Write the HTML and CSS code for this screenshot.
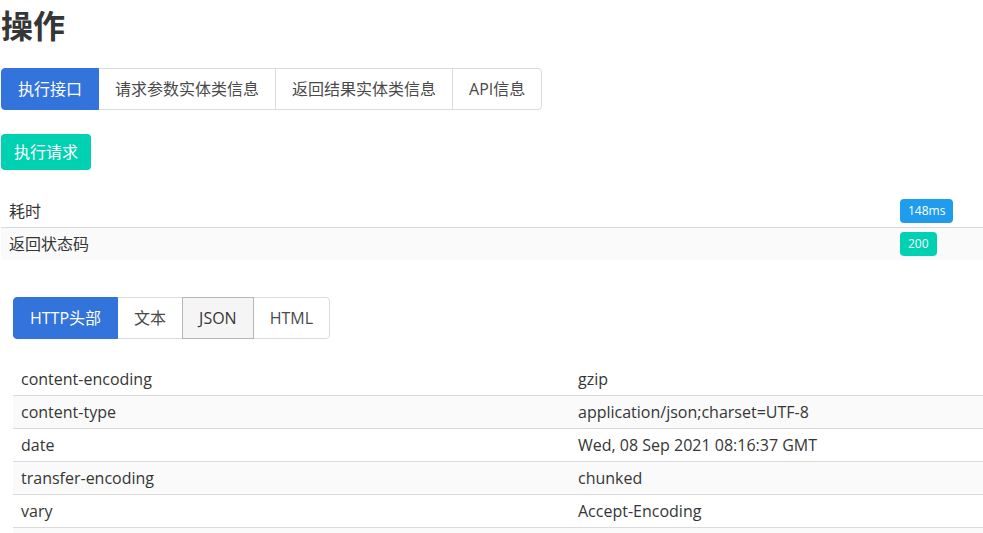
FILE: index.html
```html
<!DOCTYPE html>
<html lang="zh">
<head>
<meta charset="utf-8">
<title>操作</title>
<link rel="stylesheet" href="styles.css">
</head>
<body>
<div class="page">
  <h1 class="title">操作</h1>

  <div class="tabs">
    <ul>
      <li class="is-active"><a>执行接口</a></li>
      <li><a>请求参数实体类信息</a></li>
      <li><a>返回结果实体类信息</a></li>
      <li><a>API信息</a></li>
    </ul>
  </div>

  <div class="actions">
    <button class="button is-primary">执行请求</button>
  </div>

  <table class="table table-summary">
    <colgroup><col class="summary-key"><col></colgroup>
    <tbody>
      <tr><td>耗时</td><td><span class="tag is-info">148ms</span></td></tr>
      <tr><td>返回状态码</td><td><span class="tag is-primary">200</span></td></tr>
    </tbody>
  </table>

  <div class="response">
    <div class="tabs">
      <ul>
        <li class="is-active"><a>HTTP头部</a></li>
        <li><a>文本</a></li>
        <li class="is-hovered"><a>JSON</a></li>
        <li><a>HTML</a></li>
      </ul>
    </div>

    <table class="table table-headers">
      <colgroup><col class="header-key"><col></colgroup>
      <tbody>
        <tr><td>content-encoding</td><td>gzip</td></tr>
        <tr><td>content-type</td><td>application/json;charset=UTF-8</td></tr>
        <tr><td>date</td><td>Wed, 08 Sep 2021 08:16:37 GMT</td></tr>
        <tr><td>transfer-encoding</td><td>chunked</td></tr>
        <tr><td>vary</td><td>Accept-Encoding</td></tr>
        <tr class="row-more"><td>&nbsp;</td><td>&nbsp;</td></tr>
      </tbody>
    </table>
  </div>
</div>
</body>
</html>
```

FILE: styles.css
```css
* { box-sizing: border-box; }

html, body {
  margin: 0;
  padding: 0;
  background: #fff;
}

body {
  font-family: "Open Sans", "Noto Sans CJK SC", sans-serif;
  font-size: 16px;
  line-height: 1.5;
  color: #4a4a4a;
}

.page {
  padding: 8px 0 0 1px;
  width: 983px;
}

.title {
  margin: 0 0 24px 0;
  font-size: 32px;
  line-height: 36px;
  font-weight: 700;
  color: #363636;
}

.tabs {
  margin-bottom: 24px;
}

.tabs ul {
  display: flex;
  list-style: none;
  margin: 0;
  padding: 0;
}

.tabs li {
  position: relative;
}

.tabs li + li {
  margin-left: -1px;
}

.tabs a {
  display: block;
  padding: 8px 16px;
  border: 1px solid #dbdbdb;
  color: #4a4a4a;
  line-height: 24px;
  cursor: pointer;
  white-space: nowrap;
}

.tabs li:first-child a {
  border-radius: 4px 0 0 4px;
}

.tabs li:last-child a {
  border-radius: 0 4px 4px 0;
}

.tabs li.is-active {
  z-index: 1;
}

.tabs li.is-active a {
  background: #3273dc;
  border-color: #3273dc;
  color: #fff;
}

.tabs li.is-hovered {
  z-index: 2;
}

.tabs li.is-hovered a {
  background: #f5f5f5;
  border-color: #b5b5b5;
  color: #363636;
}

.actions {
  margin-bottom: 25px;
}

.button {
  display: inline-flex;
  align-items: center;
  height: 36px;
  padding: 0 12px;
  border: 1px solid transparent;
  border-radius: 4px;
  font-family: inherit;
  font-size: 16px;
  line-height: 24px;
  cursor: pointer;
}

.button.is-primary {
  background: #00d1b2;
  color: #fff;
}

.table {
  border-collapse: collapse;
  border-spacing: 0;
  table-layout: fixed;
  color: #363636;
  margin-bottom: 24px;
}

.table td {
  padding: 4px 8px;
  line-height: 24px;
  border-bottom: 1px solid #dbdbdb;
  vertical-align: top;
  white-space: nowrap;
}

.table tbody tr:nth-child(even) {
  background: #fafafa;
}

.table tbody tr:last-child td {
  border-bottom-width: 0;
}

.table-summary {
  width: 982px;
  margin-bottom: 24px;
}

.summary-key {
  width: 891px;
}

.response {
  padding: 13px 0 0 12px;
}

.table-headers {
  width: 970px;
}

.header-key {
  width: 557px;
}

.tag {
  display: inline-flex;
  align-items: center;
  height: 24px;
  padding: 0 8px;
  border-radius: 4px;
  font-size: 12px;
  line-height: 1.5;
  color: #fff;
  vertical-align: top;
}

.tag.is-info {
  background: #209cee;
}

.tag.is-primary {
  background: #00d1b2;
}
```
